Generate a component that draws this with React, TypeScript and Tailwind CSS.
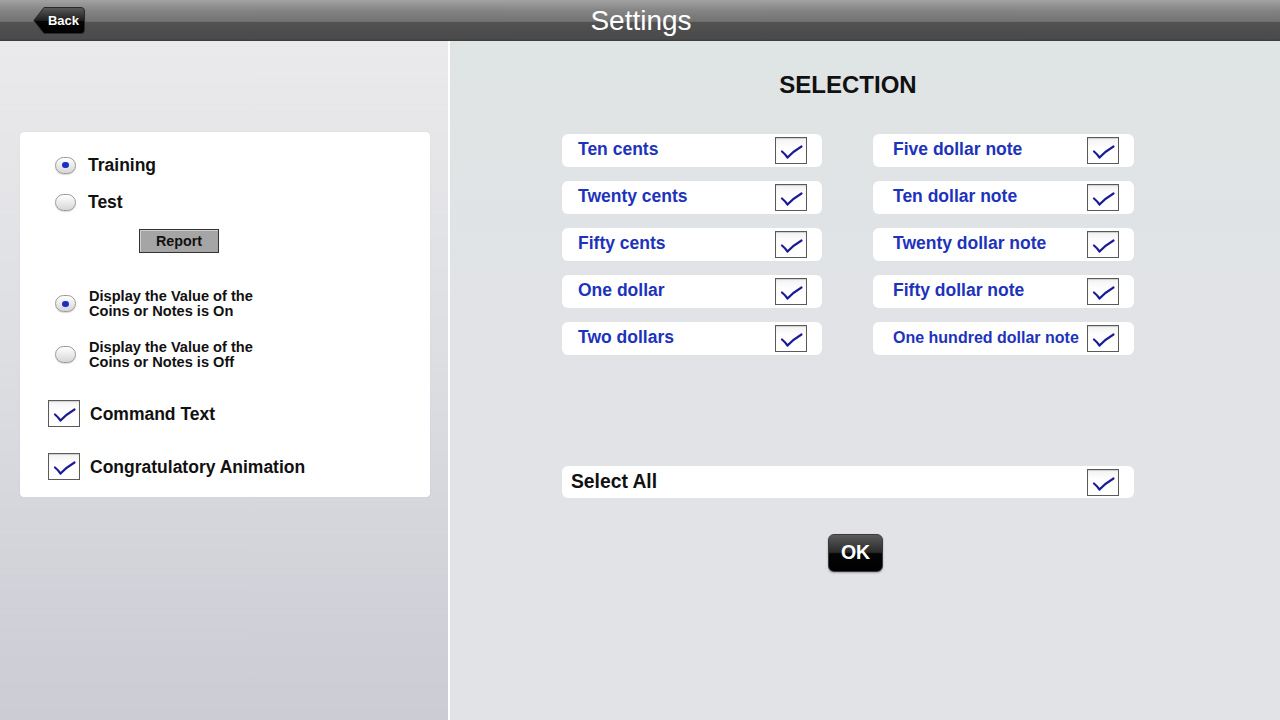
import React from 'react';

const font = { fontFamily: '"Liberation Sans", Arial, sans-serif' };

const CheckBox: React.FC<{ className?: string }> = ({ className = '' }) => (
  <div
    className={`w-[32px] h-[27px] shrink-0 border border-[#5a5a5a] bg-[linear-gradient(to_bottom,#f2f2f2,#ffffff_40%)] shadow-[inset_0_1px_1px_rgba(0,0,0,0.15)] flex items-center justify-center ${className}`}
  >
    <svg width="30" height="25" viewBox="0 0 30 25">
      <path d="M6 13.5 Q9 16 11.5 19.5 Q17 13.5 25.5 8.5" fill="none" stroke="#1b1b95" strokeWidth="2.2" strokeLinecap="round" strokeLinejoin="round" />
    </svg>
  </div>
);

const Radio: React.FC<{ on?: boolean }> = ({ on }) => (
  <div className="w-[21px] h-[17px] shrink-0 rounded-full border border-[#9a9a9a] bg-[linear-gradient(to_bottom,#ffffff,#d6d6d6)] shadow-[0_1px_1px_rgba(0,0,0,0.15)] flex items-center justify-center">
    {on && <div className="w-[7px] h-[6px] rounded-full bg-[#1c2fc4]" />}
  </div>
);

const coinsLeft = ['Ten cents', 'Twenty cents', 'Fifty cents', 'One dollar', 'Two dollars'];
const coinsRight = ['Five dollar note', 'Ten dollar note', 'Twenty dollar note', 'Fifty dollar note', 'One hundred dollar note'];

const SelRow: React.FC<{ label: string; right?: boolean }> = ({ label, right }) => (
  <div className={`h-[33px] bg-white rounded-md flex items-center justify-between pr-[15px] ${right ? 'pl-[20px]' : 'pl-[16px]'}`}>
    <span
      className={`font-bold text-[#1d33bc] ${label.length > 20 ? 'text-[16px]' : 'text-[17.5px]'} leading-none -mt-[2px]`}
    >
      {label}
    </span>
    <CheckBox />
  </div>
);

export default function App() {
  return (
    <div className="w-[1280px] h-[720px] flex flex-col overflow-hidden" style={font}>
      {/* title bar */}
      <div className="h-[41px] shrink-0 flex items-center relative bg-[linear-gradient(to_bottom,#a2a2a2_0%,#858585_25%,#727272_52%,#525152_55%,#4b4a4b_95%,#3a3a3a_100%)]">
        <div className="relative ml-[33px] w-[52px] h-[27px] flex items-center justify-end pr-[6px]">
          <svg className="absolute inset-0" width="52" height="27" viewBox="0 0 52 27">
            <defs>
              <linearGradient id="bk" x1="0" y1="0" x2="0" y2="1">
                <stop offset="0" stopColor="#5a5a5a" />
                <stop offset="0.5" stopColor="#1e1e1e" />
                <stop offset="0.52" stopColor="#050505" />
                <stop offset="1" stopColor="#000" />
              </linearGradient>
            </defs>
            <path d="M11 0.5 H48 Q51.5 0.5 51.5 4 V23 Q51.5 26.5 48 26.5 H11 L0.8 13.5 Z" fill="url(#bk)" stroke="#2a2a2a" strokeWidth="1" />
          </svg>
          <span className="relative text-white font-bold text-[13px] leading-none">Back</span>
        </div>
        <div className="absolute left-0 right-0 top-0 h-[41px] flex items-center justify-center pointer-events-none">
          <span className="text-white text-[28px] leading-none ml-[2px]">Settings</span>
        </div>
      </div>

      <div className="flex flex-1">
        {/* left panel */}
        <div className="w-[448px] shrink-0 bg-[linear-gradient(to_bottom,#eaeaec,#dcdde1_50%,#cbccd4)] pt-[91px]">
          <div className="ml-[20px] w-[410px] bg-white rounded-sm pt-[23px] pb-[17px] shadow-[0_0_1px_rgba(0,0,0,0.15)]">
            <div className="flex items-center h-[20px] pl-[35px] gap-[12px]">
              <Radio on />
              <span className="font-bold text-[17.5px] text-[#111]">Training</span>
            </div>
            <div className="flex items-center h-[20px] pl-[35px] gap-[12px] mt-[17px]">
              <Radio />
              <span className="font-bold text-[17.5px] text-[#111]">Test</span>
            </div>
            <div className="ml-[119px] mt-[17px] w-[80px] h-[24px] bg-[#a5a5a5] border border-[#333] shadow-[inset_1px_1px_0_#cfcfcf] flex items-center justify-center">
              <span className="font-bold text-[14.3px] text-[#111] leading-none">Report</span>
            </div>
            <div className="flex items-center pl-[35px] gap-[13px] mt-[36px]">
              <Radio on />
              <span className="font-bold text-[14.6px] leading-[14.5px] text-[#111]">
                Display the Value of the
                <br />
                Coins or Notes is On
              </span>
            </div>
            <div className="flex items-center pl-[35px] gap-[13px] mt-[22px]">
              <Radio />
              <span className="font-bold text-[14.6px] leading-[14.5px] text-[#111]">
                Display the Value of the
                <br />
                Coins or Notes is Off
              </span>
            </div>
            <div className="flex items-center pl-[28px] gap-[10px] mt-[31px]">
              <CheckBox />
              <span className="font-bold text-[17.5px] leading-none text-[#111] mt-[2px]">Command Text</span>
            </div>
            <div className="flex items-center pl-[28px] gap-[10px] mt-[26px]">
              <CheckBox />
              <span className="font-bold text-[17.5px] leading-none text-[#111] mt-[2px]">Congratulatory Animation</span>
            </div>
          </div>
        </div>

        {/* divider */}
        <div className="w-[2px] shrink-0 bg-white" />

        {/* right panel */}
        <div className="flex-1 bg-[linear-gradient(to_bottom,#dfe4e4,#e1e3e6_40%,#e2e3e7)] pt-[30px]">
          <div className="ml-[112px] w-[572px]">
            <div className="text-center text-[24px] leading-[28px] font-bold text-[#111]">SELECTION</div>
            <div className="mt-[35px] grid grid-cols-[260px_261px] gap-x-[51px]">
              <div className="flex flex-col gap-[14px]">
                {coinsLeft.map((c) => (
                  <SelRow key={c} label={c} />
                ))}
              </div>
              <div className="flex flex-col gap-[14px]">
                {coinsRight.map((c) => (
                  <SelRow key={c} label={c} right />
                ))}
              </div>
            </div>
            <div className="mt-[111px] h-[32px] bg-white rounded-md flex items-center justify-between pl-[9px] pr-[15px]">
              <span className="font-bold text-[19.3px] text-[#111] leading-none">Select All</span>
              <CheckBox />
            </div>
            <div className="mt-[36px] ml-[266px] w-[55px] h-[38px] rounded-[6px] border border-[#3a3a3a] bg-[linear-gradient(to_bottom,#5b5b5b,#2a2a2a_48%,#050505_52%,#000)] shadow-[0_1px_2px_rgba(0,0,0,0.3)] flex items-center justify-center">
              <span className="text-white font-bold text-[19.5px] leading-none">OK</span>
            </div>
          </div>
        </div>
      </div>
    </div>
  );
}
